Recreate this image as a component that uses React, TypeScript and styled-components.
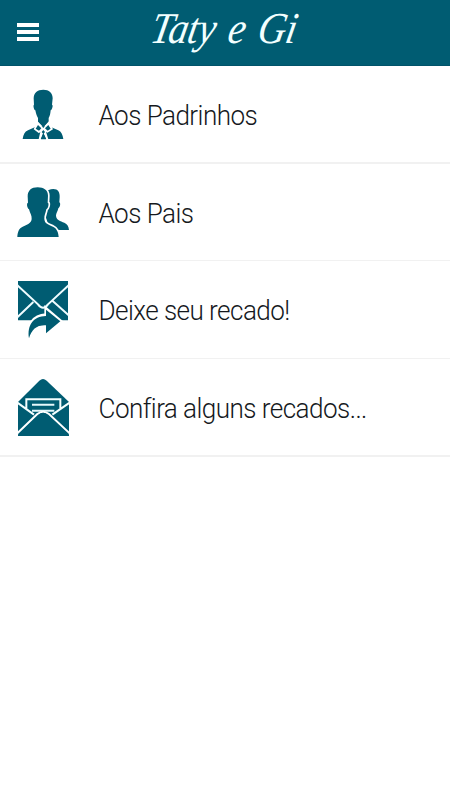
import React from "react";
import styled, { createGlobalStyle } from "styled-components";

const TEAL = "#005c72";

const GlobalStyle = createGlobalStyle`
  * { box-sizing: border-box; }
  body { margin: 0; background: #fff; }
`;

const Screen = styled.div`
  width: 100%;
  min-height: 800px;
  background: #fff;
  font-family: Roboto, "Liberation Sans", sans-serif;
`;

const Header = styled.header`
  display: grid;
  grid-template-columns: 40px 1fr 40px;
  height: 66px;
  padding-left: 17px;
  background: ${TEAL};
  border-bottom: 1px solid #00536a;
`;

const MenuButton = styled.button`
  display: flex;
  flex-direction: column;
  gap: 3px;
  width: 22px;
  height: 19px;
  margin: 23px 0 0;
  padding: 0;
  border: 0;
  background: none;
`;

const Bar = styled.span`
  height: 4px;
  width: 22px;
  background: #fff;
`;

const Title = styled.h1`
  justify-self: start;
  margin: 0 0 0 92px;
  color: #f2ffff;
  font: italic 400 44px/58px "Liberation Serif", serif;
  word-spacing: 4px;
  letter-spacing: -0.5px;
  white-space: nowrap;
  transform: scaleX(0.89) skewX(-12deg);
  transform-origin: 0 43px;
`;

const List = styled.ul`
  margin: 0;
  padding: 0;
  list-style: none;
`;

const Row = styled.li<{ $height: number; $line: number }>`
  display: flex;
  gap: 18px;
  height: ${(p) => p.$height}px;
  padding: 13px 0 0 10px;
  border-bottom: ${(p) => p.$line}px solid #f1f1f1;
`;

const Icon = styled.svg`
  flex: none;
  width: 70px;
  height: 70px;
  fill: ${TEAL};
`;

const Label = styled.span`
  color: #15191d;
  font-size: 28px;
  font-weight: 300;
  line-height: 74px;
  letter-spacing: -0.6px;
  white-space: nowrap;
  transform: translateX(0.5px) scaleX(0.932);
  transform-origin: 0 50%;
`;

const Godparent = () => (
  <Icon viewBox="0 -3 210 210">
    <path d="M100 29C82 29 71 39 71 55L72 74C69 75 71 88 76 91C78 101 80 108 84 114V125L100 142L116 125V114C120 108 121 101 122 91C127 88 130 75 126 74L128 55C128 39 117 29 100 29Z" />
    <path d="M81 139L54 151C44 155 40 165 38 177H160C158 164 154 155 145 151L117 139Z" />
    <path d="M82 124L100 144L117 124L129 148L112 158L108 155L115 178H109L100 158L92 178H86L91 155L87 160L71 148Z" fill="#fff" />
    <path d="M84 135L94 145L87 152L77 146ZM115 135L122 146L113 152L105 145ZM100 150L105 156L100 162L95 156ZM100 160L108 178H93Z" />
  </Icon>
);

const Parents = () => (
  <Icon viewBox="0 -3 210 210">
    <path d="M130 33C144 33 150 43 149 58L148 73C153 76 150 88 145 91C143 101 138 106 138 113C139 126 151 129 163 134C172 138 176 145 177 156H120L105 110V45C112 36 120 33 130 33Z" />
    <path d="M83 28C64 28 53 38 53 55L54 74C49 75 51 90 57 94C60 106 66 112 65 123C64 136 51 140 38 146C27 151 23 161 22 177H146C145 162 140 151 129 146C115 140 104 137 103 123C102 112 107 106 109 94C115 91 118 75 113 74L114 53C114 37 102 28 83 28Z" stroke="#fff" strokeWidth="10" />
    <path d="M83 28C64 28 53 38 53 55L54 74C49 75 51 90 57 94C60 106 66 112 65 123C64 136 51 140 38 146C27 151 23 161 22 177H146C145 162 140 151 129 146C115 140 104 137 103 123C102 112 107 106 109 94C115 91 118 75 113 74L114 53C114 37 102 28 83 28Z" />
  </Icon>
);

const SendMessage = () => (
  <Icon viewBox="0 0 210 210">
    <path d="M24 21H174V139H24Z" />
    <path d="M22 34L84 91Q99 111 114 91L176 34M22 130L70 84M176 124L128 81" fill="none" stroke="#effcff" strokeWidth="6" />
    <path d="M108 104L152 142L108 181V158C81 156 65 169 59 193C51 154 69 125 108 123Z" stroke="#fff" strokeWidth="10" />
    <path d="M108 107L151 142L108 178V154C81 152 65 166 57 193C51 154 69 127 108 126Z" />
  </Icon>
);

const OpenMessage = () => (
  <Icon viewBox="0 6 210 210">
    <path d="M24 96L88 32Q99 22 110 32L177 96V197H24Z" />
    <path d="M22 98L72 134M179 98L127 134M49 117V88H151V117" fill="none" stroke="#f4ffff" strokeWidth="6" />
    <path d="M66 104H133M66 122H133" fill="none" stroke="#e5f8fb" strokeWidth="6" />
    <path d="M22 190L82 132Q99 118 117 132L179 190V199H22Z" stroke="#fff" strokeWidth="6" />
    <path d="M24 194L84 137Q99 120 115 137L177 194V198H24Z" />
  </Icon>
);

const items = [
  { label: "Aos Padrinhos", icon: Godparent, height: 98, line: 2 },
  { label: "Aos Pais", icon: Parents, height: 97, line: 1 },
  { label: "Deixe seu recado!", icon: SendMessage, height: 98, line: 1 },
  { label: "Confira alguns recados...", icon: OpenMessage, height: 98, line: 2 },
];

export default function App() {
  return (
    <Screen>
      <GlobalStyle />
      <Header>
        <MenuButton aria-label="Menu">
          <Bar />
          <Bar />
          <Bar />
        </MenuButton>
        <Title>Taty e Gi</Title>
      </Header>
      <List>
        {items.map(({ label, icon: Glyph, height, line }) => (
          <Row key={label} $height={height} $line={line}>
            <Glyph />
            <Label>{label}</Label>
          </Row>
        ))}
      </List>
    </Screen>
  );
}
